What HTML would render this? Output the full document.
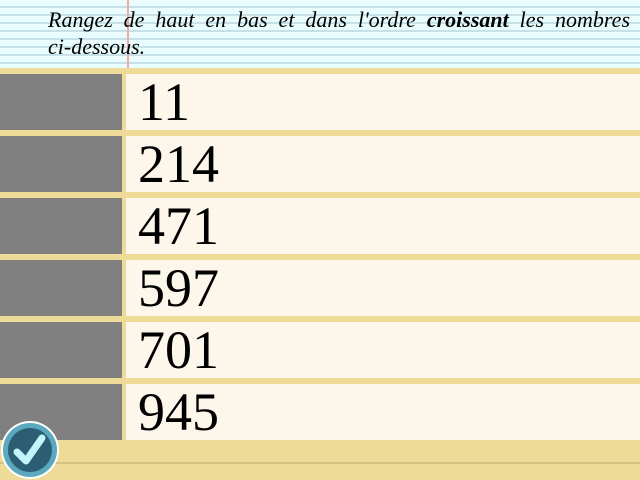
<!DOCTYPE html>
<html><head><style>
body{margin:0;width:640px;height:480px;overflow:hidden;background:#efdb98;position:relative;font-family:"Liberation Serif",serif}
#hdr{position:absolute;left:0;top:0;width:640px;height:68px;background:#eafdfe repeating-linear-gradient(to bottom,transparent 0,transparent 6px,#c6e2e8 6px,#c6e2e8 8px)}
#red{position:absolute;left:127px;top:0;width:2px;height:68px;background:#f0aaa8}
#txt{position:absolute;left:48px;top:6px;width:582px;font-style:italic;font-size:22px;line-height:27px;color:#000;text-align:justify;text-align-last:left}
.row{position:absolute;left:0;width:640px;height:56px}
.g{position:absolute;left:0;top:0;width:122px;height:56px;background:#808080}
.c{position:absolute;left:126px;top:0;width:514px;height:56px;background:#fcf7ea}
.n{position:absolute;left:138px;top:-2px;font-size:54px;line-height:60px;color:#000}
#ln{position:absolute;left:0;top:462px;width:640px;height:2px;background:#d6c185}
</style></head><body>
<div id="hdr"></div><div id="red"></div>
<div id="txt">Rangez de haut en bas et dans l'ordre <b>croissant</b> les nombres <span style="white-space:nowrap">ci-dessous.</span></div>
<div class="row" style="top:74px"><div class="g"></div><div class="c"></div><div class="n">11</div></div>
<div class="row" style="top:136px"><div class="g"></div><div class="c"></div><div class="n">214</div></div>
<div class="row" style="top:198px"><div class="g"></div><div class="c"></div><div class="n">471</div></div>
<div class="row" style="top:260px"><div class="g"></div><div class="c"></div><div class="n">597</div></div>
<div class="row" style="top:322px"><div class="g"></div><div class="c"></div><div class="n">701</div></div>
<div class="row" style="top:384px"><div class="g"></div><div class="c"></div><div class="n">945</div></div>
<div id="ln"></div>
<svg style="position:absolute;left:0;top:420px" width="62" height="60" viewBox="0 0 62 60">
<circle cx="30" cy="30" r="29" fill="#fff"/>
<circle cx="30" cy="30" r="27" fill="#5ca8be"/>
<circle cx="30" cy="30" r="22" fill="#2b5d73"/>
<path d="M17 32 L26 41 L42 18" stroke="#c0f6fb" stroke-width="7" fill="none" stroke-linecap="round" stroke-linejoin="round"/>
</svg>
</body></html>
